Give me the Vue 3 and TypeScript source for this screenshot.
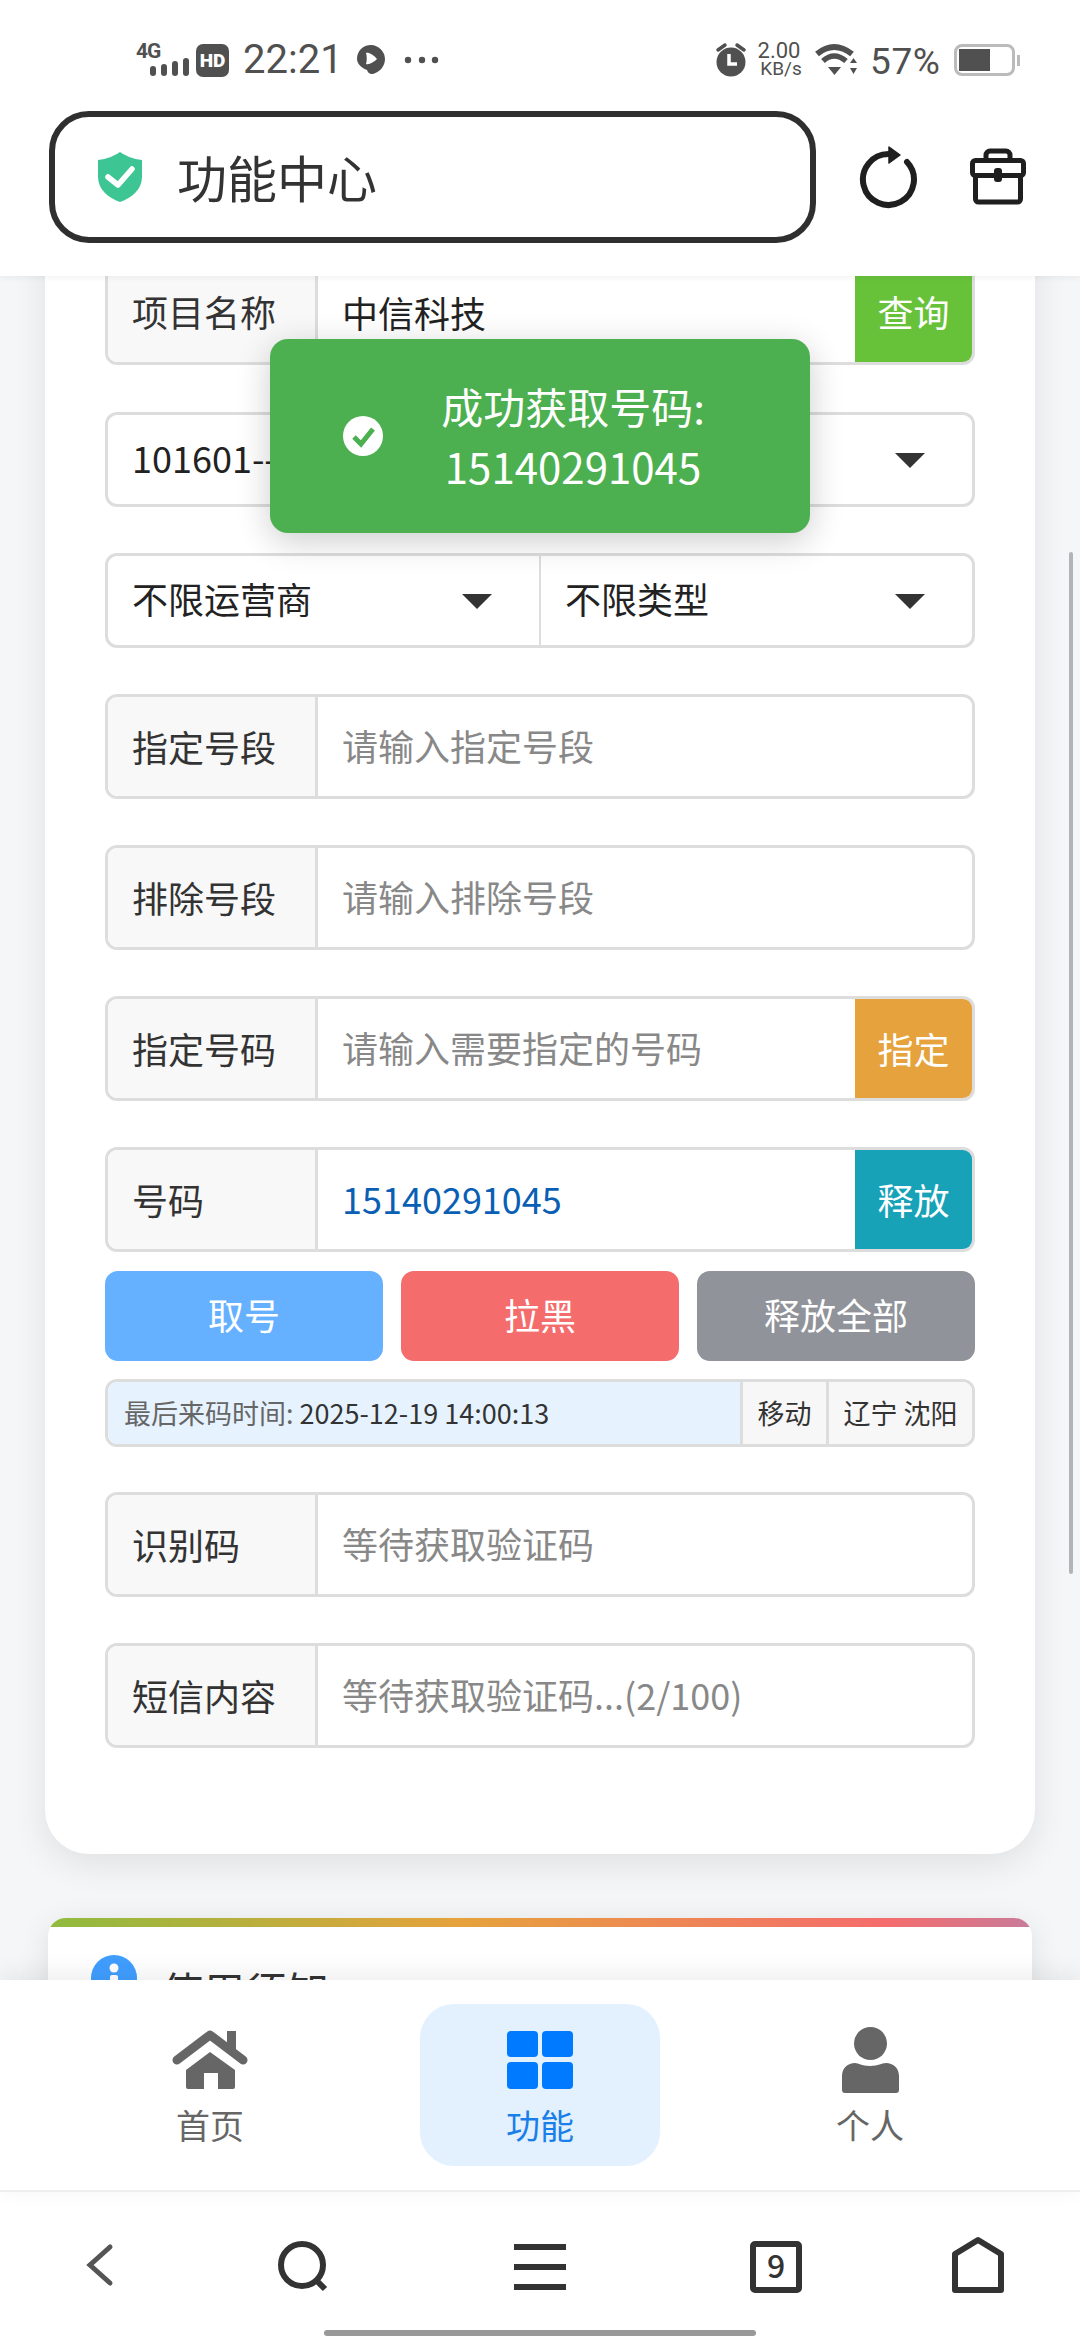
<script setup lang="ts">
const tabs = [
  { key: 'home', label: '首页' },
  { key: 'func', label: '功能' },
  { key: 'me', label: '个人' },
]
</script>

<template>
  <div class="phone">
    <header class="top">
      <div class="status">
        <div class="status-left">
          <div class="net">
            <span class="net-type">4G</span>
            <svg class="net-bars" width="40" height="20" viewBox="0 0 40 20">
              <rect x="0" y="9" width="6" height="10" rx="3" />
              <rect x="11" y="7" width="6" height="12" rx="3" />
              <rect x="22" y="4" width="6" height="15" rx="3" />
              <rect x="33" y="1" width="6" height="18" rx="3" />
            </svg>
          </div>
          <span class="hd">HD</span>
          <span class="clock">22:21</span>
          <svg width="32" height="32" viewBox="0 0 32 32">
            <path d="M16 1a14.500 14.500 0 0 1 14 14c0 7-5 13-12 15-3 .6-5-1-6-4-5-2-10-6-10-11C2 7 8 1 16 1z" fill="#505050" />
            <path d="M11 9c2-1 8 2 11 6-3 3-8 6-11 5 1-3 1-8 0-11z" fill="#fff" />
          </svg>
          <svg class="more" width="36" height="8" viewBox="0 0 36 8">
            <circle cx="4" cy="4" r="3.200" /><circle cx="18" cy="4" r="3.200" /><circle cx="31" cy="4" r="3.200" />
          </svg>
        </div>
        <div class="status-right">
          <svg width="34" height="36" viewBox="0 0 34 36">
            <circle cx="17" cy="20" r="14.500" fill="#505050" />
            <path d="M4 8l7-5M30 8l-7-5" stroke="#505050" stroke-width="3.500" stroke-linecap="round" />
            <path d="M15 12v10h8" stroke="#fff" stroke-width="3.500" fill="none" />
          </svg>
          <div class="speed"><span>2.00</span><span>KB/s</span></div>
          <svg class="wifi" width="42" height="34" viewBox="0 0 42 34">
            <path d="M2 11Q19-3 37 11" stroke="#505050" stroke-width="6" fill="none" />
            <path d="M8 18Q19 8 31 18" stroke="#505050" stroke-width="5.500" fill="none" />
            <path d="M13 24h13l-6.500 8z" fill="#505050" />
            <path d="M35 20l3.500-5 3.500 5zM35 25h7l-3.500 6z" fill="#505050" />
          </svg>
          <span class="percent">57%</span>
          <div class="battery"><span class="battery-fill"></span></div>
          <span class="battery-nub"></span>
        </div>
      </div>
      <div class="bar">
        <div class="address">
          <svg width="52" height="54" viewBox="0 0 52 54">
            <path d="M26 2c6 4 13 7 22 8v17c0 12-10 21-22 25C14 48 4 39 4 27V10c9-1 16-4 22-8z" fill="#3dc594" />
            <path d="M14 27l10 8 14-16" stroke="#fff" stroke-width="5.500" fill="none" stroke-linecap="round" stroke-linejoin="round" />
          </svg>
          <span class="address-title">功能中心</span>
        </div>
        <svg class="refresh" width="60" height="66" viewBox="0 0 60 66">
          <path d="M48 18A25.500 25.500 0 1 1 30 10" stroke="#1f1f1f" stroke-width="6" fill="none" stroke-linecap="round" />
          <path d="M30 3l11 8-11 8z" fill="#1f1f1f" stroke="#1f1f1f" stroke-width="1.500" stroke-linejoin="round" />
        </svg>
        <svg class="toolbox" width="60" height="60" viewBox="0 0 60 60">
          <path d="M18 11V8a4 4 0 0 1 4-4h16a4 4 0 0 1 4 4v3" stroke="#1f1f1f" stroke-width="5" fill="none" />
          <rect x="4.500" y="13.500" width="51" height="15" rx="3" stroke="#1f1f1f" stroke-width="5" fill="none" />
          <path d="M7.500 28v24a3 3 0 0 0 3 3h39a3 3 0 0 0 3-3V28" stroke="#1f1f1f" stroke-width="5" fill="none" />
          <rect x="26" y="21" width="8" height="14" rx="3" fill="#1f1f1f" />
        </svg>
      </div>
    </header>

    <main class="content">
      <!-- page is scrolled down, first row sits under the header -->
      <section class="card">
        <div class="row first">
          <label class="row-label">项目名称</label>
          <input class="row-input" value="中信科技" />
          <button class="row-btn green">查询</button>
        </div>

        <div class="select-row">
          <div class="select"><span>101601--中信科技</span><i class="caret"></i></div>
        </div>

        <div class="select-row">
          <div class="select"><span>不限运营商</span><i class="caret"></i></div>
          <div class="select"><span>不限类型</span><i class="caret"></i></div>
        </div>

        <div class="row">
          <label class="row-label">指定号段</label>
          <input class="row-input" placeholder="请输入指定号段" />
        </div>

        <div class="row">
          <label class="row-label">排除号段</label>
          <input class="row-input" placeholder="请输入排除号段" />
        </div>

        <div class="row">
          <label class="row-label">指定号码</label>
          <input class="row-input" placeholder="请输入需要指定的号码" />
          <button class="row-btn orange">指定</button>
        </div>

        <div class="row tight">
          <label class="row-label">号码</label>
          <input class="row-input phone-no" value="15140291045" />
          <button class="row-btn teal">释放</button>
        </div>

        <div class="actions">
          <button class="action blue">取号</button>
          <button class="action red">拉黑</button>
          <button class="action grey">释放全部</button>
        </div>

        <div class="info">
          <div class="info-time">最后来码时间: <b>2025-12-19 14:00:13</b></div>
          <div class="info-cell op">移动</div>
          <div class="info-cell area">辽宁 沈阳</div>
        </div>

        <div class="row">
          <label class="row-label">识别码</label>
          <input class="row-input" placeholder="等待获取验证码" />
        </div>

        <div class="row last">
          <label class="row-label">短信内容</label>
          <input class="row-input" placeholder="等待获取验证码...(2/100)" />
        </div>
      </section>

      <section class="notice">
        <div class="notice-line"></div>
        <div class="notice-head">
          <svg width="46" height="46" viewBox="0 0 46 46">
            <circle cx="23" cy="23" r="23" fill="#409eff" />
            <circle cx="23" cy="13" r="4.500" fill="#fff" />
            <rect x="19" y="20" width="8" height="17" rx="2" fill="#fff" />
          </svg>
          <span class="notice-title">使用须知</span>
        </div>
      </section>

      <div class="scrollbar"></div>
    </main>

    <nav class="tabbar">
      <div v-for="tab in tabs" :key="tab.key" class="tab" :class="{ active: tab.key === 'func' }">
        <svg v-if="tab.key === 'home'" width="80" height="70" viewBox="0 0 80 70">
          <rect x="57" y="5" width="9" height="22" fill="#666" />
          <path d="M7 34L40 9l33 25" stroke="#666" stroke-width="9" fill="none" stroke-linejoin="round" stroke-linecap="round" />
          <path fill-rule="evenodd" d="M16 44L40 26l25 18v17a2 2 0 0 1-2 2H18a2 2 0 0 1-2-2zM34 47v16h14V47z" fill="#666" />
        </svg>
        <svg v-else-if="tab.key === 'func'" width="80" height="70" viewBox="0 0 80 70">
          <rect x="7" y="5" width="31" height="26" rx="4" fill="#007aff" />
          <rect x="42" y="5" width="31" height="26" rx="4" fill="#007aff" />
          <rect x="7" y="36" width="31" height="27" rx="4" fill="#007aff" />
          <rect x="42" y="36" width="31" height="27" rx="4" fill="#007aff" />
        </svg>
        <svg v-else width="80" height="70" viewBox="0 0 80 70">
          <ellipse cx="40.500" cy="17.500" rx="16.500" ry="16.500" fill="#666" />
          <path d="M12 64V50c0-8 6-13 13-13 4 0 6 3 15 3s11-3 16-3c7 0 13 5 13 13v14a3 3 0 0 1-3 3H15a3 3 0 0 1-3-3z" fill="#666" />
        </svg>
        <span class="tab-label">{{ tab.label }}</span>
      </div>
    </nav>

    <footer class="browser">
      <div class="browser-item">
        <svg width="60" height="60" viewBox="0 0 60 60">
          <path d="M40 12L20 30l20 18" stroke="#555" stroke-width="5" fill="none" stroke-linecap="round" />
        </svg>
      </div>
      <div class="browser-item">
        <svg width="60" height="60" viewBox="0 0 60 60">
          <circle cx="30" cy="30" r="21" stroke="#333" stroke-width="6" fill="none" />
          <path d="M44 45l9 9" stroke="#333" stroke-width="6" />
        </svg>
      </div>
      <div class="browser-item">
        <svg width="60" height="60" viewBox="0 0 60 60">
          <rect x="4" y="9" width="52" height="6" fill="#333" />
          <rect x="4" y="29" width="52" height="6" fill="#333" />
          <rect x="4" y="49" width="52" height="6" fill="#333" />
        </svg>
      </div>
      <div class="browser-item">
        <svg width="60" height="60" viewBox="0 0 60 60">
          <rect x="7" y="9" width="46" height="46" rx="2" stroke="#333" stroke-width="6" fill="none" />
          <text x="30" y="43" text-anchor="middle" class="tab-count">9</text>
        </svg>
      </div>
      <div class="browser-item">
        <svg width="60" height="60" viewBox="0 0 60 60">
          <path d="M7 55V19L30 5l23 14v36z" stroke="#333" stroke-width="6" fill="none" stroke-linejoin="round" />
        </svg>
      </div>
      <div class="home-indicator"></div>
    </footer>

    <div class="toast">
      <svg class="toast-icon" width="42" height="42" viewBox="0 0 42 42">
        <circle cx="21" cy="21" r="20" fill="#fff" />
        <path d="M12 22l7 7 12-15" stroke="#4caf50" stroke-width="5" fill="none" />
      </svg>
      <div class="toast-text">成功获取号码:<br />15140291045</div>
    </div>
  </div>
</template>

<style>
html,
body {
  margin: 0;
  background: #fff;
}
</style>

<style scoped>
.phone {
  position: relative;
  display: flex;
  flex-direction: column;
  width: 1080px;
  height: 2340px;
  overflow: hidden;
  background: #f5f6f8;
  font-family: "Noto Sans CJK SC", "Noto Sans", sans-serif;
  font-size: 36px;
  color: #333;
}

.top {
  position: relative;
  z-index: 3;
  height: 276px;
  flex-shrink: 0;
  background: #fff;
  box-shadow: 0 2px 6px rgba(0, 0, 0, 0.05);
}

.status {
  display: flex;
  justify-content: space-between;
  align-items: center;
  height: 34px;
  padding: 43px 60px 0 136px;
  color: #505050;
  font-family: Roboto, sans-serif;
}

.status-left,
.status-right {
  display: flex;
  align-items: center;
}

.net {
  position: relative;
  width: 54px;
  height: 34px;
}

.net-type {
  position: absolute;
  left: 0;
  top: -1px;
  font-size: 21px;
  line-height: 18px;
  font-weight: 700;
  letter-spacing: -1px;
}

.net-bars {
  position: absolute;
  left: 14px;
  top: 14px;
  fill: #505050;
}

.hd {
  width: 33px;
  height: 33px;
  margin-left: 6px;
  border-radius: 7px;
  background: #505050;
  color: #fff;
  font-size: 19px;
  line-height: 33px;
  font-weight: 900;
  text-align: center;
}

.clock {
  width: 95px;
  margin: 0 17px 0 14px;
  font-size: 40px;
  line-height: 34px;
  white-space: nowrap;
}

.more {
  margin-left: 17px;
  fill: #505050;
}

.speed {
  display: flex;
  flex-direction: column;
  align-items: center;
  width: 46px;
  margin-left: 8px;
  font-size: 22px;
  line-height: 18px;
}

.speed span:last-child {
  font-size: 19px;
  margin-left: 4px;
}

.wifi {
  margin-left: 13px;
}

.percent {
  width: 70px;
  margin: 4px 14px 0 13px;
  font-size: 37px;
  letter-spacing: 0.6px;
  line-height: 34px;
  white-space: nowrap;
}

.battery {
  box-sizing: border-box;
  display: flex;
  width: 61px;
  height: 32px;
  padding: 2px;
  border: 3px solid #bbb;
  border-radius: 8px;
}

.battery-fill {
  width: 31px;
  background: #505050;
}

.battery-nub {
  width: 3px;
  height: 11px;
  margin-left: 2px;
  background: #bbb;
}

.bar {
  display: flex;
  align-items: center;
  margin: 34px 0 0 49px;
}

.address {
  box-sizing: border-box;
  display: flex;
  align-items: center;
  width: 767px;
  height: 132px;
  padding-left: 39px;
  border: 6px solid #2f2f2f;
  border-radius: 40px;
}

.address-title {
  margin: -2px 0 0 31px;
  font-size: 50px;
  line-height: 60px;
  color: #333;
}

.refresh {
  margin-left: 43px;
}

.toolbox {
  margin-left: 49px;
}

.content {
  position: relative;
  flex: 1;
  min-height: 0;
  overflow: hidden;
}

.card {
  box-sizing: border-box;
  width: 990px;
  margin: -100px 45px 0;
  padding: 83px 60px 106px;
  background: #fff;
  border-radius: 44px;
  box-shadow: 0 10px 36px rgba(0, 0, 0, 0.09);
}

.row {
  box-sizing: border-box;
  display: flex;
  align-items: stretch;
  height: 105px;
  margin-bottom: 46px;
  background: #fff;
  border: 3px solid #ddd;
  border-radius: 12px;
  overflow: hidden;
}

.row.first {
  height: 106px;
  margin-bottom: 47px;
}

.row.first .row-input {
  padding-bottom: 0;
}

.row.tight {
  margin-bottom: 19px;
}

.row.last {
  margin-bottom: 0;
}

.row-label {
  box-sizing: border-box;
  display: flex;
  align-items: center;
  width: 210px;
  flex-shrink: 0;
  padding: 0 0 2px 24px;
  background: #f8f8f8;
  border-right: 3px solid #ddd;
  color: #333;
}

.row-input {
  flex: 1;
  min-width: 0;
  padding: 0 0 4px 24px;
  border: 0;
  outline: 0;
  background: transparent;
  font: inherit;
  color: #222;
}

.row-input::placeholder {
  color: #888;
  opacity: 1;
}

.phone-no {
  color: #0a5fb4;
}

.row-btn {
  width: 117px;
  flex-shrink: 0;
  padding: 0 0 2px;
  border: 0;
  font: inherit;
  color: #fff;
}

.green {
  background: #67c23a;
}

.orange {
  background: #e6a23c;
}

.teal {
  background: #17a2b8;
}

.select-row {
  box-sizing: border-box;
  display: flex;
  height: 95px;
  margin-bottom: 46px;
  border: 3px solid #ddd;
  border-radius: 12px;
  overflow: hidden;
}

.select {
  position: relative;
  flex: 1;
  display: flex;
  align-items: center;
  padding: 0 0 5px 24px;
  color: #222;
  white-space: nowrap;
}

.select + .select {
  border-left: 2px solid #ddd;
}

.caret {
  position: absolute;
  right: 47px;
  top: 38px;
  border-style: solid;
  border-width: 15px 15px 0;
  border-color: #333 transparent transparent;
}

.actions {
  display: grid;
  grid-template-columns: repeat(3, 1fr);
  gap: 18px;
  margin-bottom: 18px;
}

.action {
  height: 90px;
  padding: 0 0 4px;
  border: 0;
  border-radius: 13px;
  font: inherit;
  color: #fff;
}

.blue {
  background: #66b1ff;
}

.red {
  background: #f56c6c;
}

.grey {
  background: #909399;
}

.info {
  box-sizing: border-box;
  display: flex;
  height: 68px;
  margin-bottom: 45px;
  border: 3px solid #ddd;
  border-radius: 12px;
  overflow: hidden;
  font-size: 27px;
  line-height: 62px;
}

.info-time {
  flex: 1;
  padding-left: 16px;
  background: #e6f3ff;
  color: #666;
  white-space: nowrap;
}

.info-time b {
  font-weight: 400;
  color: #333;
}

.info-cell {
  box-sizing: border-box;
  background: #f7f7f7;
  border-left: 3px solid #ddd;
  text-align: center;
  white-space: nowrap;
}

.op {
  width: 86px;
}

.area {
  width: 146px;
}

.notice {
  box-sizing: border-box;
  width: 984px;
  height: 260px;
  margin: 64px 48px 0;
  background: #fff;
  border-radius: 18px 18px 0 0;
  overflow: hidden;
  box-shadow: 0 6px 30px rgba(0, 0, 0, 0.1);
}

.notice-line {
  height: 9px;
  background: linear-gradient(90deg, #8fbb3e 0%, #e6a23c 42%, #f56c6c 85%, #c87b9a 100%);
}

.notice-head {
  display: flex;
  align-items: flex-start;
  padding: 28px 0 0 43px;
}

.notice-title {
  margin: 7px 0 0 24px;
  font-size: 42px;
  line-height: 56px;
  color: #333;
}

.scrollbar {
  position: absolute;
  left: 1069px;
  top: 276px;
  width: 4px;
  height: 1022px;
  border-radius: 2px;
  background: #b3b4b7;
}

.tabbar {
  position: relative;
  z-index: 2;
  box-sizing: border-box;
  display: grid;
  grid-template-columns: repeat(3, 240px);
  justify-content: center;
  column-gap: 90px;
  height: 212px;
  flex-shrink: 0;
  padding-top: 24px;
  background: #fff;
  border-bottom: 2px solid #eee;
  box-shadow: 0 -6px 24px rgba(0, 0, 0, 0.07);
}

.tab {
  display: flex;
  flex-direction: column;
  align-items: center;
  height: 162px;
  padding-top: 22px;
  box-sizing: border-box;
  border-radius: 34px;
}

.tab.active {
  background: #e3f0fe;
}

.tab-label {
  margin-top: 6px;
  font-size: 34px;
  line-height: 46px;
  color: #666;
}

.tab.active .tab-label {
  color: #1a7fe8;
}

.browser {
  position: relative;
  display: grid;
  grid-template-columns: 200px 204px 272px 200px 204px;
  flex-shrink: 0;
  height: 148px;
  padding-top: 43px;
  box-sizing: border-box;
  background: #fff;
}

.browser-item {
  display: flex;
  justify-content: center;
  height: 60px;
}

.tab-count {
  font-size: 32px;
  font-weight: 500;
  fill: #333;
}

.home-indicator {
  position: absolute;
  left: 324px;
  bottom: 4px;
  width: 432px;
  height: 6px;
  border-radius: 3px;
  background: #999;
}

.toast {
  position: absolute;
  z-index: 2;
  left: 270px;
  top: 339px;
  box-sizing: border-box;
  display: flex;
  align-items: center;
  width: 540px;
  height: 194px;
  padding-left: 72px;
  background: #4caf50;
  border-radius: 18px;
  box-shadow: 0 8px 34px rgba(0, 0, 0, 0.2);
  color: #fff;
  font-size: 42px;
  line-height: 60px;
}

.toast-icon {
  flex-shrink: 0;
}

.toast-text {
  flex: 1;
  padding-right: 48px;
  text-align: center;
}
</style>
